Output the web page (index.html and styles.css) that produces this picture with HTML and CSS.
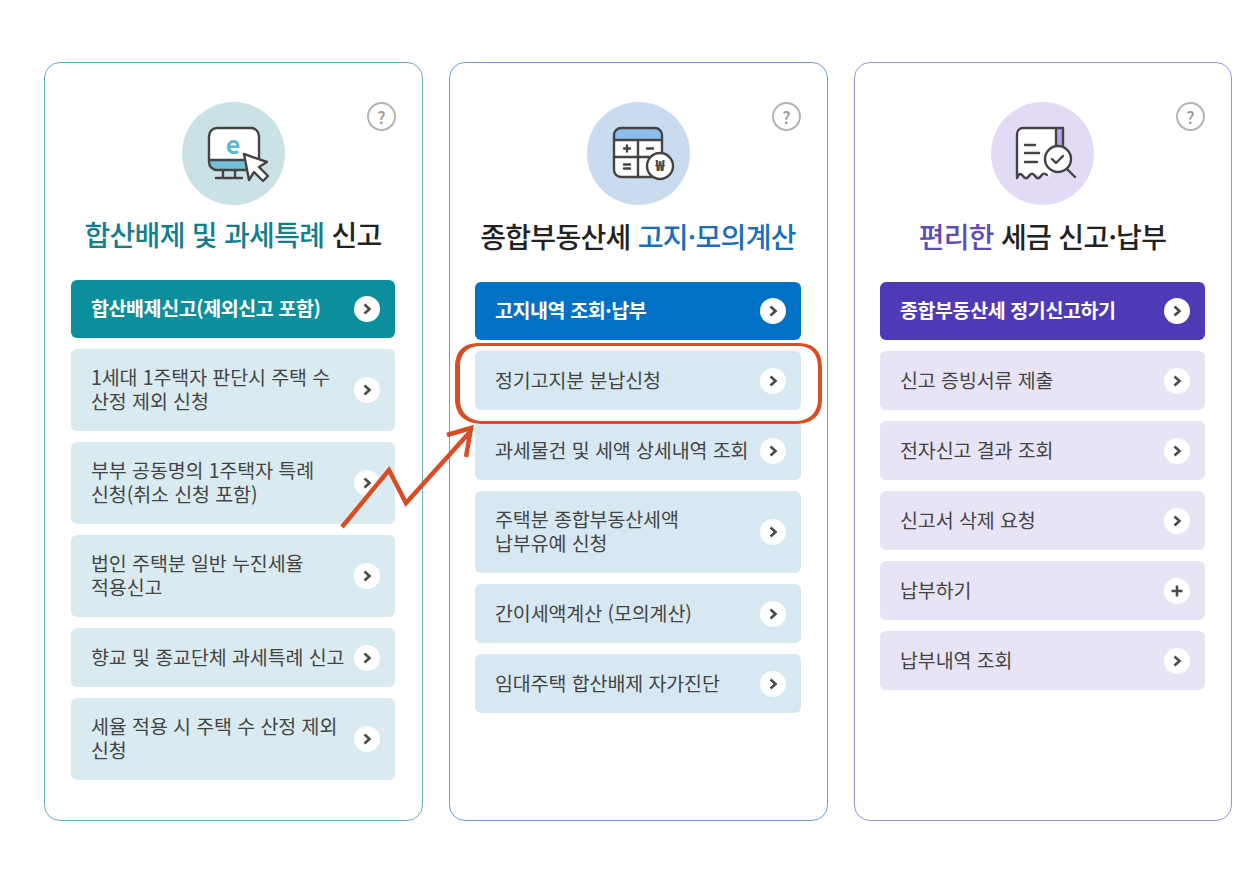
FILE: index.html
```html
<!DOCTYPE html>
<html lang="ko">
<head>
    <meta charset="UTF-8">
    <title>종합부동산세</title>
    <link rel="stylesheet" href="styles.css">
</head>
<body>
    <div class="page">
        <section class="card card-teal">
            <span class="help">?</span>
            <svg class="card-icon" viewBox="0 0 103 103">
                <circle cx="51.500" cy="51.500" r="51.500" fill="#c9e2e5"/>
                <rect x="27" y="26" width="50" height="42" rx="8" fill="#fff"/>
                <path d="M27 58h50v2a8 8 0 0 1-8 8H35a8 8 0 0 1-8-8z" fill="#6fc0d8"/>
                <rect x="27" y="26" width="50" height="42" rx="8" class="line"/>
                <path d="M27 58h36M41 68v8M53 68v8M34 76h26" class="line"/>
                <text x="51" y="52" class="icon-e">e</text>
                <path d="M62 52l23 8-8 5 9 9-5 5-9-9-5 8z" fill="#fff" stroke="#444" stroke-width="2.400" stroke-linejoin="round"/>
            </svg>
            <h2 class="card-title"><em>합산배제 및 과세특례</em> 신고</h2>
            <div class="menu">
                <a class="item primary"><span>합산배제신고(제외신고 포함)</span><i class="go"><svg viewBox="0 0 26 26"><path d="M10.500 8.500l5 4.500-5 4.500"/></svg></i></a>
                <a class="item tall"><span>1세대 1주택자 판단시 주택 수<br>산정 제외 신청</span><i class="go"><svg viewBox="0 0 26 26"><path d="M10.500 8.500l5 4.500-5 4.500"/></svg></i></a>
                <a class="item tall"><span>부부 공동명의 1주택자 특례<br>신청(취소 신청 포함)</span><i class="go"><svg viewBox="0 0 26 26"><path d="M10.500 8.500l5 4.500-5 4.500"/></svg></i></a>
                <a class="item tall"><span>법인 주택분 일반 누진세율<br>적용신고</span><i class="go"><svg viewBox="0 0 26 26"><path d="M10.500 8.500l5 4.500-5 4.500"/></svg></i></a>
                <a class="item"><span>향교 및 종교단체 과세특례 신고</span><i class="go"><svg viewBox="0 0 26 26"><path d="M10.500 8.500l5 4.500-5 4.500"/></svg></i></a>
                <a class="item tall"><span>세율 적용 시 주택 수 산정 제외<br>신청</span><i class="go"><svg viewBox="0 0 26 26"><path d="M10.500 8.500l5 4.500-5 4.500"/></svg></i></a>
            </div>
        </section>

        <section class="card card-blue">
            <span class="help">?</span>
            <svg class="card-icon" viewBox="0 0 103 103">
                <circle cx="51.500" cy="51.500" r="51.500" fill="#c9dcef"/>
                <rect x="27" y="26" width="48" height="49" rx="7" fill="#fff"/>
                <path d="M27 38v-5a7 7 0 0 1 7-7h34a7 7 0 0 1 7 7v5z" fill="#8ebcef"/>
                <rect x="27" y="26" width="48" height="49" rx="7" class="line"/>
                <path d="M27 38h48M51 38v37M27 55h48" class="line"/>
                <path d="M37 46.500h6M40 43.500v6M60 46.500h6M37 62.500h6M37 66.500h6" class="line"/>
                <circle cx="73" cy="64" r="13" fill="#fff" stroke="#444" stroke-width="2.400"/>
                <text x="73" y="69" class="icon-won">₩</text>
            </svg>
            <h2 class="card-title">종합부동산세 <em>고지·모의계산</em></h2>
            <div class="menu">
                <a class="item primary"><span>고지내역 조회·납부</span><i class="go"><svg viewBox="0 0 26 26"><path d="M10.500 8.500l5 4.500-5 4.500"/></svg></i></a>
                <a class="item"><span>정기고지분 분납신청</span><i class="go"><svg viewBox="0 0 26 26"><path d="M10.500 8.500l5 4.500-5 4.500"/></svg></i></a>
                <a class="item"><span>과세물건 및 세액 상세내역 조회</span><i class="go"><svg viewBox="0 0 26 26"><path d="M10.500 8.500l5 4.500-5 4.500"/></svg></i></a>
                <a class="item tall"><span>주택분 종합부동산세액<br>납부유예 신청</span><i class="go"><svg viewBox="0 0 26 26"><path d="M10.500 8.500l5 4.500-5 4.500"/></svg></i></a>
                <a class="item"><span>간이세액계산 (모의계산)</span><i class="go"><svg viewBox="0 0 26 26"><path d="M10.500 8.500l5 4.500-5 4.500"/></svg></i></a>
                <a class="item"><span>임대주택 합산배제 자가진단</span><i class="go"><svg viewBox="0 0 26 26"><path d="M10.500 8.500l5 4.500-5 4.500"/></svg></i></a>
            </div>
        </section>

        <section class="card card-purple">
            <span class="help">?</span>
            <svg class="card-icon" viewBox="0 0 103 103">
                <circle cx="51.500" cy="51.500" r="51.500" fill="#e3dbf5"/>
                <path d="M72 48V26H32a6 6 0 0 0-6 6v44l4-4 4 3 4-3 4 3 4-3 4 3 4-3 4 3" fill="#fff"/>
                <path d="M65 26h7v28H65z" fill="#b9a3ea"/>
                <path d="M72 48V26H32a6 6 0 0 0-6 6v44c2-5 4-5 6-2s4 3 6 0 4-3 6 0 4 3 6 0 4-3 6-1M65 26v20M34 43h10M34 51h14M34 60h12" class="line"/>
                <circle cx="67" cy="57" r="13" fill="#fff" stroke="#444" stroke-width="2.400"/>
                <path d="M61 57l4 4 7-7M76 67l8 8" class="line"/>
            </svg>
            <h2 class="card-title"><em>편리한</em> 세금 신고·납부</h2>
            <div class="menu">
                <a class="item primary"><span>종합부동산세 정기신고하기</span><i class="go"><svg viewBox="0 0 26 26"><path d="M10.500 8.500l5 4.500-5 4.500"/></svg></i></a>
                <a class="item"><span>신고 증빙서류 제출</span><i class="go"><svg viewBox="0 0 26 26"><path d="M10.500 8.500l5 4.500-5 4.500"/></svg></i></a>
                <a class="item"><span>전자신고 결과 조회</span><i class="go"><svg viewBox="0 0 26 26"><path d="M10.500 8.500l5 4.500-5 4.500"/></svg></i></a>
                <a class="item"><span>신고서 삭제 요청</span><i class="go"><svg viewBox="0 0 26 26"><path d="M10.500 8.500l5 4.500-5 4.500"/></svg></i></a>
                <a class="item"><span>납부하기</span><i class="go"><svg viewBox="0 0 26 26"><path d="M7.500 13h11M13 7.500v11"/></svg></i></a>
                <a class="item"><span>납부내역 조회</span><i class="go"><svg viewBox="0 0 26 26"><path d="M10.500 8.500l5 4.500-5 4.500"/></svg></i></a>
            </div>
        </section>

        <!-- red marks drawn over the screenshot -->
        <svg class="annotation" viewBox="0 0 1260 891">
            <path fill-rule="evenodd" d="M480 343H797C814 343 822 351 822 368V399C822 416 812 424 795 424H484C466 424 455 416 455 399V368C455 351 463 343 480 343ZM482 346C467 346 460 353 460 368V399C460 413 469 421 484 421H795C809 421 818 413 818 399V368C818 353 811 346 797 346Z" class="oval"/>
            <path d="M342 527l47-57 17 33 63-70M447 435l24-7-5 29" class="mark"/>
        </svg>
    </div>
</body>
</html>
```

FILE: styles.css
```css
* {
    box-sizing: border-box;
    margin: 0;
    padding: 0;
}

body {
    background-color: #fff;
    color: #444;
    font-family: "Noto Sans CJK KR", "Noto Sans", sans-serif;
}

.page {
    position: relative;
    display: flex;
    gap: 26px;
    width: 1260px;
    height: 891px;
    padding: 62px 0 0 44px;
    overflow: hidden;
}

.card {
    position: relative;
    display: flex;
    flex-direction: column;
    align-items: center;
    width: 379px;
    height: 759px;
    padding: 39px 27px 0 26px;
    border: 1px solid #5fb0c0;
    border-radius: 16px;
    background-color: #fff;
}

.card-blue {
    padding: 39px 26px 0 25px;
    border-color: #6a9ed8;
}

.card-purple {
    width: 378px;
    padding: 39px 26px 0 25px;
    border-color: #a58fdb;
}

.card-icon {
    display: block;
    flex: none;
    width: 103px;
    height: 103px;
}

.line {
    fill: none;
    stroke: #444;
    stroke-width: 2.400;
    stroke-linecap: round;
    stroke-linejoin: round;
}

.icon-e {
    fill: #5ab8d4;
    font-size: 25px;
    font-weight: 700;
    text-anchor: middle;
}

.icon-won {
    fill: #444;
    font-size: 15px;
    font-weight: 900;
    text-anchor: middle;
}

.help {
    position: absolute;
    top: 39px;
    right: 26px;
    width: 29px;
    height: 29px;
    border: 2px solid #b4b4b4;
    border-radius: 50%;
    color: #999;
    font-size: 17px;
    font-weight: 500;
    line-height: 25px;
    text-align: center;
}

.card-title {
    width: 100%;
    height: 40px;
    margin: 11px 0 26px;
    color: #222;
    font-size: 28px;
    font-weight: 500;
    line-height: 40px;
    letter-spacing: -0.7px;
    text-align: center;
    white-space: nowrap;
}

.card-title em {
    font-style: normal;
}

.card-teal .card-title {
    margin-top: 9px;
}

.card-teal .card-title em {
    color: #137f8c;
}

.card-blue .card-title em {
    color: #1a6fb8;
}

.card-purple .card-title em {
    color: #5f4bb6;
}

.menu {
    display: flex;
    flex-direction: column;
    gap: 11px;
    width: 100%;
}

.item {
    display: flex;
    align-items: center;
    justify-content: space-between;
    min-height: 59px;
    padding: 0 15px 0 20px;
    border-radius: 6px;
    background-color: #d9ebf0;
    color: #444;
    font-size: 19.500px;
    line-height: 24px;
    letter-spacing: -0.1px;
    white-space: nowrap;
}

.item span {
    margin-bottom: 2px;
}

.item.tall {
    min-height: 82px;
}

.card-blue .item {
    background-color: #d7e8f3;
}

.card-purple .item {
    background-color: #e8e4f6;
}

.item.primary {
    min-height: 58px;
    background-color: #0b8f9c;
    color: #fff;
    font-size: 19.500px;
    font-weight: 700;
    letter-spacing: -0.4px;
}

.card-blue .item.primary {
    background-color: #0071c5;
}

.card-purple .item.primary {
    background-color: #4f39b5;
}

.go {
    display: block;
    flex: none;
    width: 26px;
    height: 26px;
    border-radius: 50%;
    background-color: #fff;
}

.go svg {
    display: block;
    width: 26px;
    height: 26px;
    fill: none;
    stroke: #4a4a4a;
    stroke-width: 2.600;
}

.annotation {
    position: absolute;
    top: 0;
    left: 0;
    width: 1260px;
    height: 891px;
    pointer-events: none;
}

.oval {
    fill: #d84d24;
}

.mark {
    fill: none;
    stroke: #d84d24;
    stroke-width: 4.500;
    stroke-linejoin: miter;
}
```
